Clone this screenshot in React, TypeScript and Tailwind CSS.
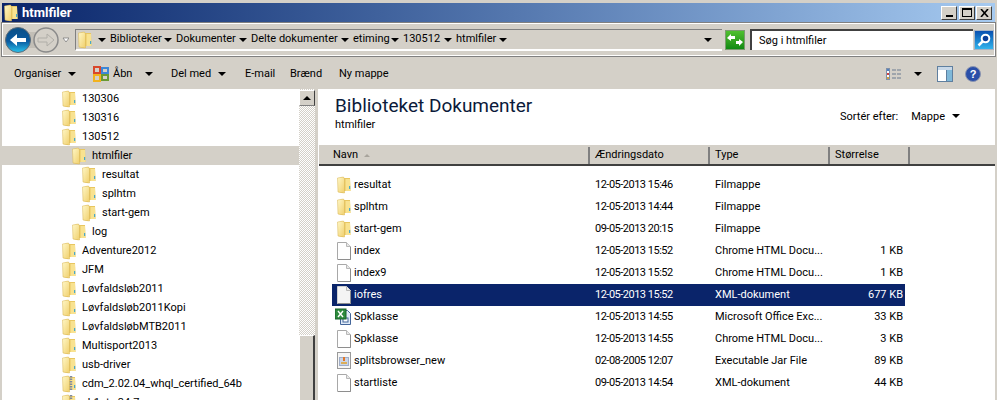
import { useId } from 'react'

const font = 'font-["Roboto","Noto_Sans",sans-serif]'

function Folder({ zip = false }: { zip?: boolean }) {
  const id = useId()
  return (
    <svg width="14" height="18" viewBox="0 0 14 18" className="shrink-0">
      <defs>
        <linearGradient id={id} x1="0" y1="0" x2="1" y2="1">
          <stop offset="0" stopColor="#fff8c8" />
          <stop offset="1" stopColor="#f0cf6c" />
        </linearGradient>
      </defs>
      <path d="M1 2.5 L6 1 L7 2 L13 2 L13.5 15 L7 15 L6 17 L1 16 Z" fill="#e8c660" />
      <path d="M0.5 2 L6.5 1 L7.5 3 L7.5 17 L1 16 Z" fill={`url(#${id})`} stroke="#d8b550" strokeWidth="0.5" />
      <path d="M8.5 3 L13 3 L13.5 15 L8.5 15 Z" fill="#f8e290" />
      <rect x="12" y="10" width="1.2" height="3" fill="#4aa8c8" />
      {zip && <path d="M9 1 V16" stroke="#7f8aa0" strokeWidth="2.5" strokeDasharray="1.5 1" />}
    </svg>
  )
}

function Doc({ selected = false }: { selected?: boolean }) {
  return (
    <svg width="14" height="18" viewBox="0 0 14 18" className="shrink-0">
      <path
        d="M0.5 0.5 H9.5 L13.5 4.5 V17.5 H0.5 Z"
        fill={selected ? '#f4f4f4' : '#ffffff'}
        stroke={selected ? '#d0d0d0' : '#a8a8a8'}
      />
      <path d="M9.5 0.5 V4.5 H13.5" fill="#e8e8e8" stroke="#b8b8b8" />
      <path d="M1 17.5 H13.5 V5" fill="none" stroke="#8e8e8e" />
    </svg>
  )
}

function ExcelDoc() {
  return (
    <svg width="17" height="18" viewBox="0 0 17 18" className="shrink-0 -ml-[2px] -mr-[1px]">
      <path d="M5.5 2.5 H12.5 L15.5 5.5 V16.5 H5.5 Z" fill="#dfeaf7" stroke="#44669a" />
      <rect x="8" y="10" width="5" height="4" fill="#fff" stroke="#44669a" />
      <rect x="0" y="1" width="11" height="10" fill="#2e8b3d" stroke="#17602a" />
      <path d="M3 3 L8 9 M8 3 L3 9" stroke="#fff" strokeWidth="1.4" />
    </svg>
  )
}

function JarDoc() {
  return (
    <svg width="14" height="18" viewBox="0 0 14 18" className="shrink-0">
      <rect x="0.5" y="0.5" width="13" height="16" fill="#f6f6f6" stroke="#9a9a9a" />
      <rect x="2.5" y="5.5" width="9" height="8" fill="#c9d5e8" stroke="#a0aec8" />
      <path d="M7 5 V9" stroke="#e0762a" strokeWidth="2" />
      <path d="M4 11 H10" stroke="#e0a02a" strokeWidth="1.5" />
    </svg>
  )
}

function Caret() {
  return <div className="w-0 h-0 border-x-[4px] border-x-transparent border-t-[4px] border-t-black shrink-0" />
}

function WindowButton({ children }: { children: React.ReactNode }) {
  return (
    <div className="w-[16px] h-[14px] bg-[#d4d0c8] border border-t-white border-l-white border-r-[#404040] border-b-[#404040] flex items-center justify-center">
      {children}
    </div>
  )
}

function TitleBar() {
  return (
    <div className="h-[19px] mt-[3px] mx-[2px] pl-[2px] pr-[3px] flex items-center bg-gradient-to-r from-[#0a246a] to-[#a6caf0]">
      <Folder />
      <span className="ml-[4px] text-white text-[13px] font-bold leading-none">htmlfiler</span>
      <div className="ml-auto flex">
        <WindowButton>
          <div className="w-[7px] h-[2px] bg-black mt-[6px]" />
        </WindowButton>
        <div className="w-[2px]" />
        <WindowButton>
          <div className="w-[10px] h-[9px] border border-black border-t-2" />
        </WindowButton>
        <div className="w-[1px]" />
        <WindowButton>
          <svg width="9" height="8" viewBox="0 0 9 8">
            <path d="M1 0 L8 8 M8 0 L1 8" stroke="#000" strokeWidth="1.6" />
          </svg>
        </WindowButton>
      </div>
    </div>
  )
}

function Crumb({ label, w }: { label: string; w: string }) {
  return (
    <div className="flex items-center gap-[4px] mr-[5px]">
      <Caret />
      <span className={`${w} whitespace-nowrap`}>{label}</span>
    </div>
  )
}

function AddressBar() {
  return (
    <div className="h-[35px] mx-[1px] border border-[#808080] outline outline-white -outline-offset-2 flex items-center pl-[3px] pr-[3px]">
      <svg width="64" height="28" viewBox="0 0 64 28" className="shrink-0">
        <defs>
          <linearGradient id="backBlue" x1="0" y1="0" x2="0" y2="1">
            <stop offset="0" stopColor="#0a4f86" />
            <stop offset="0.55" stopColor="#0a5aa0" />
            <stop offset="1" stopColor="#29c4ee" />
          </linearGradient>
        </defs>
        <rect x="12" y="6" width="30" height="16" fill="#c2beb6" />
        <circle cx="13" cy="14" r="12.5" fill="url(#backBlue)" stroke="#5a6a78" />
        <path d="M5 14 L12 8 V12 H21 V16 H12 V20 Z" fill="#fff" />
        <circle cx="41" cy="14" r="12" fill="#d4d0c8" stroke="#8a8a8a" strokeWidth="1.5" />
        <path d="M49 14 L42 8 V12 H33 V16 H42 V20 Z" fill="#d4d0c8" stroke="#b0aea8" />
        <path d="M58 12 H64 L61 16 Z" fill="#fff" stroke="#707070" strokeWidth="0.7" />
      </svg>
      <div className="ml-[6px] mt-[1px] w-[647px] h-[22px] border-t border-l border-t-[#808080] border-l-[#808080] border-b-2 border-b-white flex items-center text-[11px] text-black shrink-0">
        <div className="ml-[2px] mr-[6px] flex">
          <Folder />
        </div>
        <Crumb label="Biblioteker" w="w-[49px]" />
        <Crumb label="Dokumenter" w="w-[58px]" />
        <Crumb label="Delte dokumenter" w="w-[85px]" />
        <Crumb label="etiming" w="w-[33px]" />
        <Crumb label="130512" w="w-[36px]" />
        <Crumb label="htmlfiler" w="w-[38px]" />
        <Caret />
        <div className="ml-auto mr-[10px]">
          <Caret />
        </div>
      </div>
      <div className="ml-[3px] w-[20px] h-[20px] border border-[#7c9a70] bg-gradient-to-b from-[#4fc02f] to-[#0d8a12] flex items-center justify-center shrink-0">
        <svg width="16" height="12" viewBox="0 0 16 12">
          <path d="M0 4 L4 0 V2 H8 V5 H4 V7 Z M16 8 L12 12 V10 H9 V7 H12 V5 Z" fill="#fff" />
        </svg>
      </div>
      <div className="ml-[5px] w-[223px] h-[21px] pt-[1px] bg-white border-t-2 border-l-2 border-t-[#404040] border-l-[#404040] flex items-center pl-[7px] text-[11px] text-black shrink-0">
        Søg i htmlfiler
      </div>
      <div className="ml-[1px] w-[20px] h-[20px] border border-[#a8b4c4] bg-gradient-to-b from-[#0a4fb0] to-[#35b4ec] flex items-center justify-center shrink-0">
        <svg width="14" height="14" viewBox="0 0 14 14">
          <circle cx="8.5" cy="5.5" r="3.8" fill="#0a3f9a" stroke="#fff" strokeWidth="2" />
          <path d="M5.5 8.5 L1.5 12.5" stroke="#fff" strokeWidth="2.5" />
        </svg>
      </div>
    </div>
  )
}

function Toolbar() {
  return (
    <div className="h-[31px] mt-[1px] pt-[1px] flex items-center pl-[14px] pr-[16px] text-[11px] text-black whitespace-nowrap">
      <span className="w-[46px]">Organiser</span>
      <div className="ml-[8px]">
        <Caret />
      </div>
      <svg width="16" height="16" viewBox="0 0 16 16" className="ml-[17px] shrink-0">
        <rect x="1" y="1" width="6" height="6" fill="none" stroke="#d9472b" strokeWidth="2" />
        <rect x="9" y="2" width="6" height="5" fill="none" stroke="#3c86d8" strokeWidth="2" />
        <rect x="1" y="9" width="6" height="6" fill="none" stroke="#f2b21d" strokeWidth="2" />
        <rect x="9" y="9" width="6" height="5" fill="none" stroke="#6a9a32" strokeWidth="2" />
      </svg>
      <span className="ml-[4px] w-[18px]">Åbn</span>
      <div className="ml-[14px]">
        <Caret />
      </div>
      <span className="ml-[18px] w-[38px]">Del med</span>
      <div className="ml-[9px]">
        <Caret />
      </div>
      <span className="ml-[19px] w-[28px]">E-mail</span>
      <span className="ml-[17px] w-[32px]">Brænd</span>
      <span className="ml-[17px] w-[48px]">Ny mappe</span>
      <svg width="16" height="12" viewBox="0 0 16 12" className="ml-auto shrink-0">
        <rect x="0.5" y="0.5" width="3" height="11" fill="#fff" stroke="#8090a8" />
        <rect x="1" y="1" width="2" height="2" fill="#5080c0" />
        <rect x="1" y="5" width="2" height="2" fill="#d04040" />
        <rect x="1" y="9" width="2" height="2" fill="#d0a040" />
        <path d="M6 2 H15 M6 6 H15 M6 10 H15" stroke="#6a7a90" strokeDasharray="4 1" />
      </svg>
      <div className="ml-[12px]">
        <Caret />
      </div>
      <svg width="16" height="16" viewBox="0 0 16 16" className="ml-[15px] shrink-0">
        <rect x="0.5" y="0.5" width="15" height="15" fill="#fff" stroke="#5f7f9f" />
        <rect x="1" y="1" width="14" height="3" fill="#c8d8e8" />
        <rect x="10" y="4" width="5" height="11" fill="#7fb8d8" />
        <path d="M9.5 4 V15" stroke="#5f7f9f" />
      </svg>
      <svg width="16" height="16" viewBox="0 0 16 16" className="ml-[12px] shrink-0">
        <circle cx="8" cy="8" r="7.5" fill="#2a4fa8" stroke="#8a94b0" />
        <text x="8" y="12" textAnchor="middle" fontSize="11" fontWeight="700" fill="#fff" fontFamily="Liberation Sans">
          ?
        </text>
      </svg>
    </div>
  )
}

const tree: { label: string; depth: number; selected?: boolean; zip?: boolean }[] = [
  { label: '130306', depth: 0 },
  { label: '130316', depth: 0 },
  { label: '130512', depth: 0 },
  { label: 'htmlfiler', depth: 1, selected: true },
  { label: 'resultat', depth: 2 },
  { label: 'splhtm', depth: 2 },
  { label: 'start-gem', depth: 2 },
  { label: 'log', depth: 1 },
  { label: 'Adventure2012', depth: 0 },
  { label: 'JFM', depth: 0 },
  { label: 'Løvfaldsløb2011', depth: 0 },
  { label: 'Løvfaldsløb2011Kopi', depth: 0 },
  { label: 'LøvfaldsløbMTB2011', depth: 0 },
  { label: 'Multisport2013', depth: 0 },
  { label: 'usb-driver', depth: 0 },
  { label: 'cdm_2.02.04_whql_certified_64b', depth: 0, zip: true },
  { label: 'ch1ntx 34-7', depth: 0, zip: true },
]

const depthPad = ['pl-[60px]', 'pl-[70px]', 'pl-[80px]']

function TreePane() {
  return (
    <div className="w-[316px] shrink-0 flex bg-white overflow-hidden">
      <div className="w-[297px] shrink-0 overflow-hidden text-[11px] text-black">
        {tree.map((n) => (
          <div
            key={n.label}
            className={`h-[19px] flex items-center gap-[6px] ${depthPad[n.depth]} ${n.selected ? 'bg-[#d4d0c8]' : ''}`}
          >
            <Folder zip={n.zip} />
            <span className="mt-[1px] whitespace-nowrap">{n.label}</span>
          </div>
        ))}
      </div>
      <div className="w-[16px] h-full flex flex-col bg-[conic-gradient(#d4d0c8_25%,#fff_0_50%,#d4d0c8_0_75%,#fff_0)] bg-[length:2px_2px]">
        <div className="h-[16px] mt-[1px] bg-[#d4d0c8] border border-t-white border-l-white border-r-[#404040] border-b-[#808080] flex items-center justify-center shrink-0">
          <div className="w-0 h-0 border-x-[4px] border-x-transparent border-b-[4px] border-b-black" />
        </div>
        <div className="mt-auto h-[65px] bg-[#d4d0c8] border-t border-l border-r-2 border-t-white border-l-white border-r-[#404040] shrink-0" />
      </div>
      <div className="w-[3px] bg-[#d4d0c8] shrink-0" />
    </div>
  )
}

const columns = [
  { label: 'Navn', w: 'w-[271px] pl-[14px]' },
  { label: 'Ændringsdato', w: 'w-[120px] pl-[5px]' },
  { label: 'Type', w: 'w-[120px] pl-[5px]' },
  { label: 'Størrelse', w: 'w-[80px] pl-[5px]' },
  { label: '', w: 'flex-1' },
]

type FileRow = { name: string; date: string; type: string; size?: string; icon: 'folder' | 'doc' | 'xl' | 'jar'; selected?: boolean }

const files: FileRow[] = [
  { name: 'resultat', date: '12-05-2013 15:46', type: 'Filmappe', icon: 'folder' },
  { name: 'splhtm', date: '12-05-2013 14:44', type: 'Filmappe', icon: 'folder' },
  { name: 'start-gem', date: '09-05-2013 20:15', type: 'Filmappe', icon: 'folder' },
  { name: 'index', date: '12-05-2013 15:52', type: 'Chrome HTML Docu...', size: '1 KB', icon: 'doc' },
  { name: 'index9', date: '12-05-2013 15:52', type: 'Chrome HTML Docu...', size: '1 KB', icon: 'doc' },
  { name: 'iofres', date: '12-05-2013 15:52', type: 'XML-dokument', size: '677 KB', icon: 'doc', selected: true },
  { name: 'Spklasse', date: '12-05-2013 14:55', type: 'Microsoft Office Exc...', size: '33 KB', icon: 'xl' },
  { name: 'Spklasse', date: '12-05-2013 14:55', type: 'Chrome HTML Docu...', size: '3 KB', icon: 'doc' },
  { name: 'splitsbrowser_new', date: '02-08-2005 12:07', type: 'Executable Jar File', size: '89 KB', icon: 'jar' },
  { name: 'startliste', date: '09-05-2013 14:54', type: 'XML-dokument', size: '44 KB', icon: 'doc' },
]

function FileIcon({ row }: { row: FileRow }) {
  if (row.icon === 'folder') return <Folder />
  if (row.icon === 'xl') return <ExcelDoc />
  if (row.icon === 'jar') return <JarDoc />
  return <Doc selected={row.selected} />
}

function ListPane() {
  return (
    <div className="flex-1 min-w-0 bg-white flex flex-col text-[11px] text-black overflow-hidden">
      <div className="h-[56px] pl-[17px] pr-[35px] flex justify-between shrink-0">
        <div className="pt-[5px]">
          <div className="text-[19px] leading-[24px] text-[#0b1a3a]">Biblioteket Dokumenter</div>
          <div className="leading-[16px] -mt-[1px]">htmlfiler</div>
        </div>
        <div className="pt-[19px] flex items-start leading-[18px]">
          <span>Sortér efter:</span>
          <span className="ml-[13px]">Mappe</span>
          <div className="ml-[7px] mt-[6px]">
            <Caret />
          </div>
        </div>
      </div>
      <div className="h-[21px] pt-[2px] ml-[1px] flex bg-[#d4d0c8] border-b-2 border-b-[#404040] shrink-0">
        {columns.map((c) => (
          <div
            key={c.label || 'end'}
            className={`${c.w} flex items-center border-r-2 border-r-[#808080] last:border-r-0 whitespace-nowrap`}
          >
            {c.label}
            {c.label === 'Navn' && (
              <div className="ml-[6px] w-0 h-0 border-x-[3px] border-x-transparent border-b-[3px] border-b-[#a8a49c]" />
            )}
          </div>
        ))}
      </div>
      <div className="pt-[8px] ml-[14px] w-[573px]">
        {files.map((f, i) => (
          <div
            key={i}
            className={`h-[22px] flex items-center ${f.selected ? 'bg-[#0a246a] text-white' : ''}`}
          >
            <div className="w-[263px] pl-[5px] flex items-center gap-[3px] shrink-0">
              <FileIcon row={f} />
              <span className="whitespace-nowrap">{f.name}</span>
            </div>
            <div className="w-[120px] whitespace-nowrap shrink-0 tracking-[-0.5px]">{f.date}</div>
            <div className="w-[115px] whitespace-nowrap shrink-0">{f.type}</div>
            <div className="flex-1 text-right pr-[2px] whitespace-nowrap">{f.size}</div>
          </div>
        ))}
      </div>
    </div>
  )
}

export default function App() {
  return (
    <div className={`w-[997px] h-[400px] overflow-hidden bg-[#d4d0c8] flex flex-col ${font}`}>
      <TitleBar />
      <AddressBar />
      <Toolbar />
      <div className="flex-1 min-h-0 flex ml-[2px] mr-[2px]">
        <TreePane />
        <ListPane />
      </div>
    </div>
  )
}
